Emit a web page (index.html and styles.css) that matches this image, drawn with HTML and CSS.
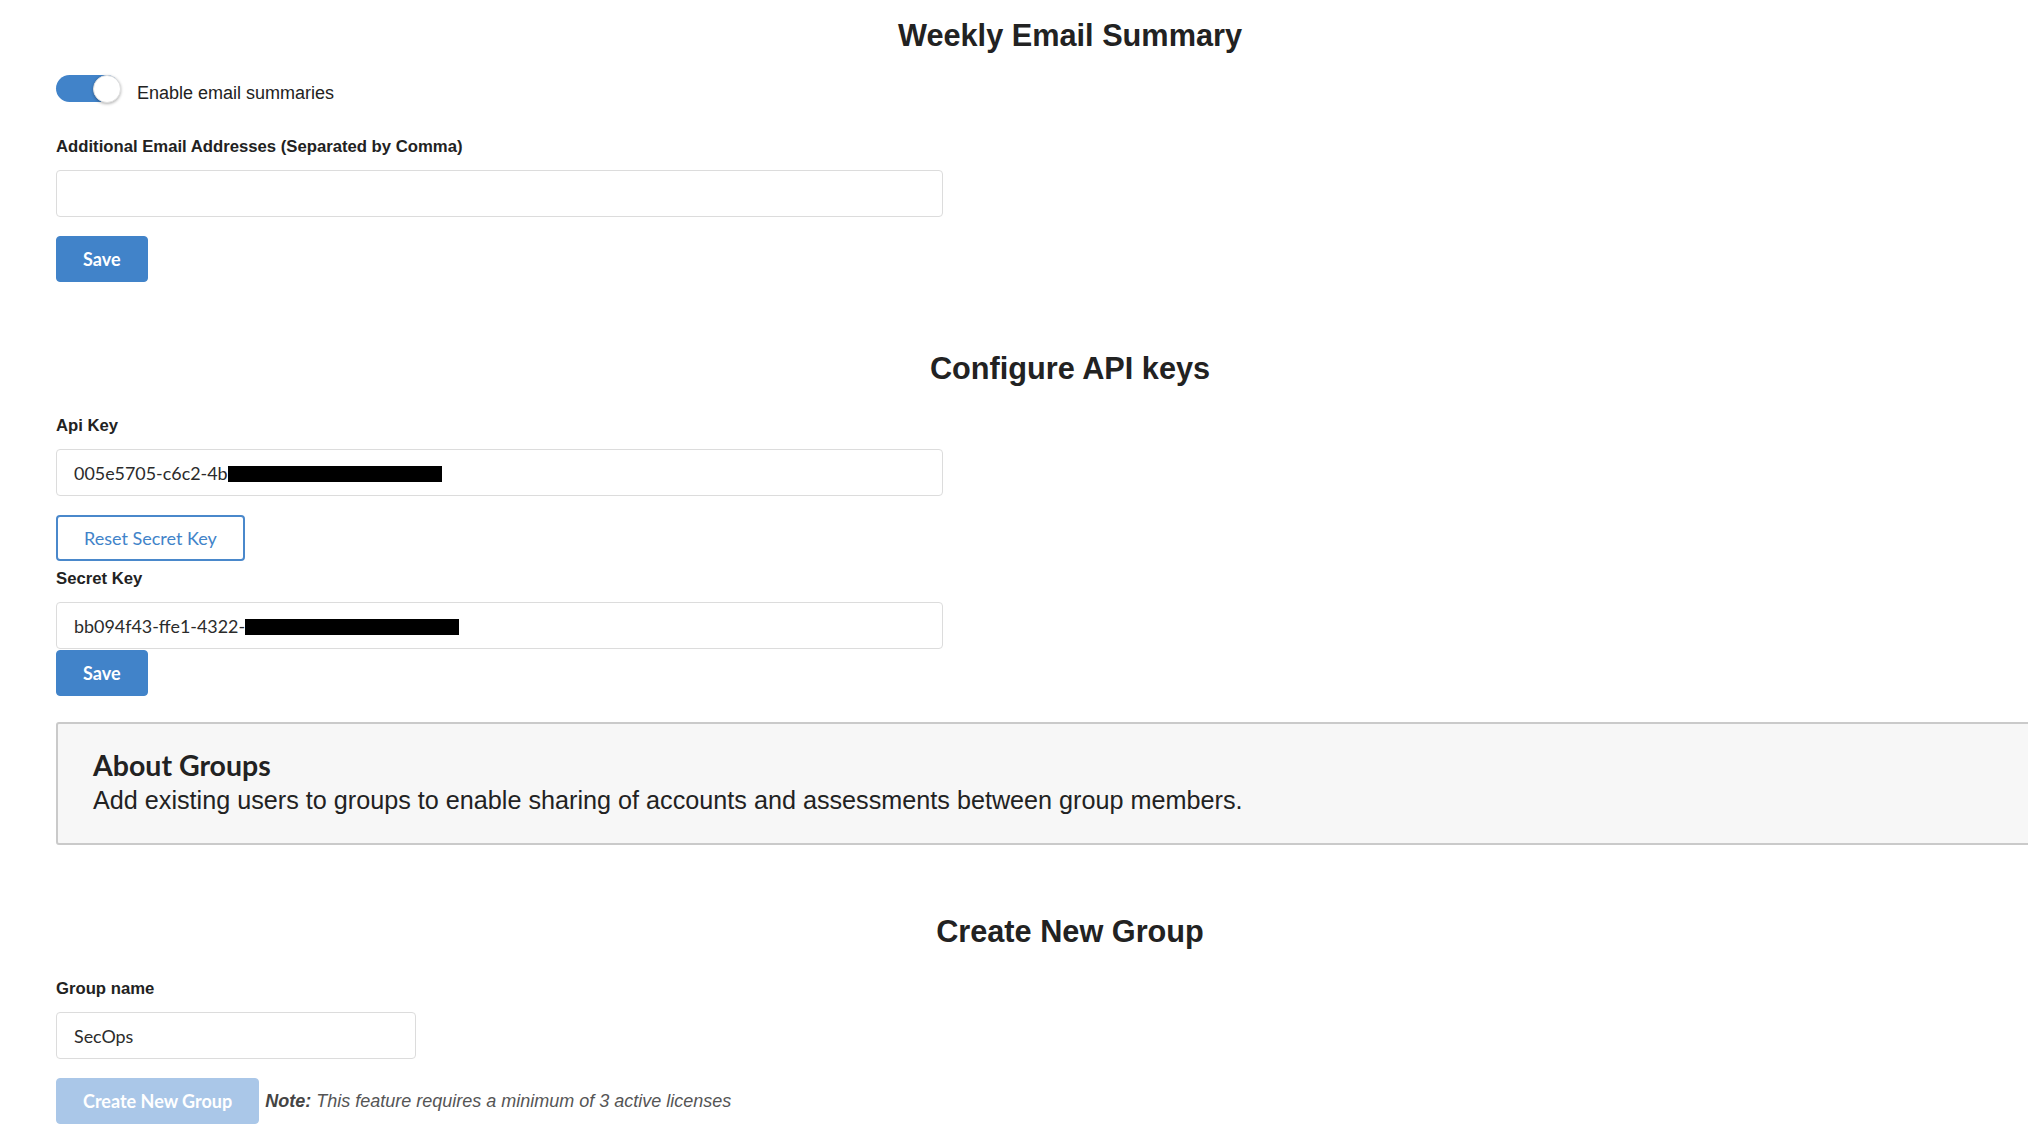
FILE: index.html
```html
<!DOCTYPE html>
<html lang="en">
<head>
<meta charset="utf-8">
<title>Settings</title>
<link rel="stylesheet" href="styles.css">
</head>
<body>
<main class="page">
  <section class="section">
    <h2 class="title title-first">Weekly Email Summary</h2>
    <div class="toggle-row">
      <span class="switch"><span class="knob"></span></span>
      <span class="toggle-label">Enable email summaries</span>
    </div>
    <label class="field-label label-first">Additional Email Addresses (Separated by Comma)</label>
    <div class="field field-wide"></div>
    <button class="btn btn-primary btn-after-field">Save</button>
  </section>

  <section class="section">
    <h2 class="title title-next">Configure API keys</h2>
    <label class="field-label label-after-title">Api Key</label>
    <div class="field field-wide">005e5705-c6c2-4b<span class="redact redact-api"></span></div>
    <button class="btn btn-outline btn-after-field">Reset Secret Key</button>
    <label class="field-label label-after-button">Secret Key</label>
    <div class="field field-wide">bb094f43-ffe1-4322-<span class="redact redact-secret"></span></div>
    <button class="btn btn-primary btn-tight">Save</button>
  </section>

  <section class="about">
    <h3 class="about-title">About Groups</h3>
    <p class="about-text">Add existing users to groups to enable sharing of accounts and assessments between group members.</p>
  </section>

  <section class="section">
    <h2 class="title title-next">Create New Group</h2>
    <label class="field-label label-after-title">Group name</label>
    <div class="field field-small">SecOps</div>
    <div class="action-row">
      <button class="btn btn-disabled" disabled>Create New Group</button>
      <span class="note"><b>Note:</b> This feature requires a minimum of 3 active licenses</span>
    </div>
  </section>
</main>
</body>
</html>
```

FILE: styles.css
```css
html, body {
  margin: 0;
  padding: 0;
  overflow: hidden;
  background: #ffffff;
}

.page {
  width: 2028px;
  margin-left: 56px;
  font-family: "Liberation Sans", Arial, sans-serif;
  color: #222222;
}

.section {
  display: flex;
  flex-direction: column;
  align-items: flex-start;
}

.title {
  align-self: stretch;
  margin: 0;
  font-size: 30.7px;
  line-height: 36px;
  font-weight: 700;
  text-align: center;
  color: #222222;
}

.title-first { margin-top: 18px; }
.title-next { margin-top: 69px; }

.toggle-row {
  display: flex;
  align-items: flex-start;
  margin-top: 21px;
}

.switch {
  position: relative;
  flex: none;
  width: 64px;
  height: 27px;
  border-radius: 14px;
  background: #4183c9;
}

.knob {
  position: absolute;
  top: 0;
  right: -1px;
  width: 28px;
  height: 28px;
  box-sizing: border-box;
  border-radius: 50%;
  border: 1px solid #e0e0e0;
  background: #ffffff;
  box-shadow: 0 1px 3px rgba(0, 0, 0, 0.3);
}

.toggle-label {
  margin-left: 17px;
  padding-top: 7px;
  font-size: 18px;
  line-height: 22px;
  color: #222222;
}

.field-label {
  display: block;
  margin-bottom: 13px;
  font-size: 16.7px;
  line-height: 20px;
  font-weight: 700;
  color: #222222;
}

.label-first { margin-top: 33px; }
.label-after-title { margin-top: 29px; }
.label-after-button { margin-top: 8px; }

.field {
  display: flex;
  align-items: center;
  box-sizing: border-box;
  height: 47px;
  padding: 0 17px;
  border: 1px solid #dcdcdc;
  border-radius: 4px;
  background: #ffffff;
  font-family: Lato, "Liberation Sans", sans-serif;
  font-size: 17.9px;
  color: #2b2b2b;
  white-space: nowrap;
}

.field-wide { width: 887px; }
.field-small { width: 360px; }

.redact {
  display: inline-block;
  height: 16px;
  background: #000000;
  align-self: center;
  margin-top: 2px;
}

.redact-api { width: 214px; }
.redact-secret { width: 214px; }

.btn {
  box-sizing: border-box;
  height: 46px;
  padding: 0 26px;
  border-radius: 4px;
  border: 1px solid #4183c9;
  font-family: Lato, "Liberation Sans", sans-serif;
  font-size: 18px;
  cursor: pointer;
}

.btn-primary {
  background: #4183c9;
  color: #ffffff;
  font-weight: 700;
}

.btn-outline {
  background: #ffffff;
  color: #4183c9;
  font-weight: 400;
  border: 2px solid #4a88cb;
}

.btn-disabled {
  background: #aac7e8;
  border-color: #aac7e8;
  color: #ffffff;
  font-weight: 700;
  cursor: default;
}

.btn-after-field { margin-top: 19px; }
.btn-tight { margin-top: 1px; }

.about {
  margin-top: 26px;
  padding: 26px 35px 28px;
  border: 2px solid #cacaca;
  border-radius: 3px;
  background: #f7f7f7;
}

.about-title {
  margin: 0;
  font-family: Lato, "Liberation Sans", sans-serif;
  font-size: 28.5px;
  line-height: 30px;
  font-weight: 700;
  color: #222222;
}

.about-text {
  margin: 5px 0 0;
  font-size: 25.2px;
  line-height: 30px;
  color: #222222;
}

.action-row {
  display: flex;
  align-items: center;
  margin-top: 19px;
}

.note {
  margin-left: 6px;
  font-size: 18px;
  font-style: italic;
  color: #555555;
}

.note b {
  color: #444444;
}
```
